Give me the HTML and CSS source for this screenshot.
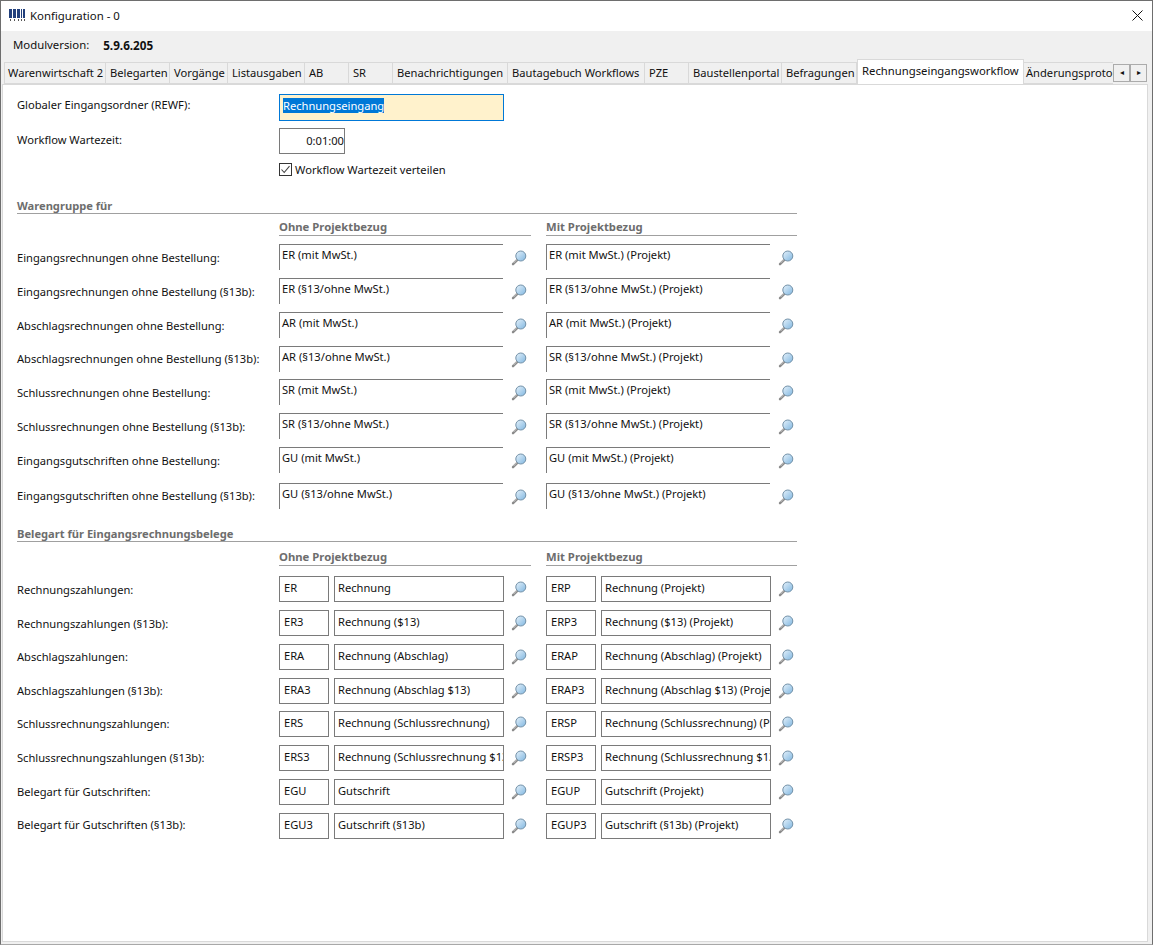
FILE: index.html
```html
<!DOCTYPE html>
<html lang="de">
<head>
  <meta charset="UTF-8">
  <title>Konfiguration - 0</title>
  <link rel="stylesheet" href="styles.css">
</head>
<body>
  <svg class="defs" width="0" height="0">
    <defs>
      <linearGradient id="lens" x1="0" y1="0" x2="1" y2="1">
        <stop offset="0" stop-color="#e6f2fb"/>
        <stop offset="1" stop-color="#7fb6e0"/>
      </linearGradient>
      <symbol id="lookup" viewBox="0 0 16 16">
        <path d="M6.6 9.6 2 14.2" stroke="#8a8a8a" stroke-width="2.4" stroke-linecap="round"/>
        <path d="M6.2 9.2 2.6 13" stroke="#d8d8d8" stroke-width="0.8"/>
        <circle cx="9.8" cy="6" r="5" fill="url(#lens)" stroke="#7391a8" stroke-width="1"/>
      </symbol>
    </defs>
  </svg>
  <div class="window">
    <div class="titlebar">
      <svg class="app-icon" width="16" height="14" viewBox="0 0 16 14">
        <g fill="#22407c">
          <rect x="0" y="1" width="3" height="9"/>
          <rect x="4" y="1" width="3" height="9"/>
          <rect x="8" y="1" width="3" height="9"/>
          <rect x="12" y="1" width="1" height="9"/>
          <rect x="14" y="1" width="2" height="9"/>
        </g>
        <g fill="#555">
          <rect x="1" y="11" width="1" height="2"/>
          <rect x="5" y="11" width="1" height="2"/>
          <rect x="9" y="11" width="1" height="2"/>
          <rect x="12" y="11" width="1" height="2"/>
          <rect x="15" y="11" width="1" height="2"/>
        </g>
      </svg>
      <span class="title">Konfiguration - 0</span>
      <svg class="close" width="11" height="11" viewBox="0 0 11 11">
        <path d="M0.5 0.5 10.5 10.5M10.5 0.5 0.5 10.5" stroke="#111" stroke-width="1"/>
      </svg>
    </div>
    <div class="versionbar">
      <span class="version-label">Modulversion:</span>
      <b class="version">5.9.6.205</b>
    </div>
    <div class="tabbar">
      <div class="tab">Warenwirtschaft 2</div>
      <div class="tab">Belegarten</div>
      <div class="tab">Vorgänge</div>
      <div class="tab">Listausgaben</div>
      <div class="tab">AB</div>
      <div class="tab">SR</div>
      <div class="tab">Benachrichtigungen</div>
      <div class="tab">Bautagebuch Workflows</div>
      <div class="tab">PZE</div>
      <div class="tab">Baustellenportal</div>
      <div class="tab">Befragungen</div>
      <div class="tab active">Rechnungseingangsworkflow</div>
      <div class="tab clipped">Änderungsprotokoll</div>
      <div class="scroller">
        <button class="scroll-btn">&#9666;</button>
        <button class="scroll-btn">&#9656;</button>
      </div>
    </div>
    <div class="pane">
      <div class="top-row">
        <label class="label">Globaler Eingangsordner (REWF):</label>
        <div class="field folder"><span class="selected">Rechnungseingang</span></div>
      </div>
      <div class="top-row wait">
        <label class="label">Workflow Wartezeit:</label>
        <div class="field time">0:01:00</div>
      </div>
      <div class="check-row">
        <svg width="13" height="13" viewBox="0 0 13 13">
          <rect x="0.5" y="0.5" width="12" height="12" fill="#fff" stroke="#333"/>
          <path d="M2.5 6.5 5.2 9.5 10.5 3.2" fill="none" stroke="#444" stroke-width="1.1"/>
        </svg>
        <span>Workflow Wartezeit verteilen</span>
      </div>

      <div class="section first">Warengruppe für</div>
      <div class="group-heads">
        <div class="group-head">Ohne Projektbezug</div>
        <div class="group-head">Mit Projektbezug</div>
      </div>
      <div id="goods"></div>

      <div class="section second">Belegart für Eingangsrechnungsbelege</div>
      <div class="group-heads">
        <div class="group-head">Ohne Projektbezug</div>
        <div class="group-head">Mit Projektbezug</div>
      </div>
      <div id="types" class="types"></div>
    </div>
  </div>

  <script>
    const lookup = '<svg class="lookup" width="16" height="16"><use href="#lookup"/></svg>';

    const goods = [
      ['Eingangsrechnungen ohne Bestellung:', 'ER (mit MwSt.)', 'ER (mit MwSt.) (Projekt)'],
      ['Eingangsrechnungen ohne Bestellung (§13b):', 'ER (§13/ohne MwSt.)', 'ER (§13/ohne MwSt.) (Projekt)'],
      ['Abschlagsrechnungen ohne Bestellung:', 'AR (mit MwSt.)', 'AR (mit MwSt.) (Projekt)'],
      ['Abschlagsrechnungen ohne Bestellung (§13b):', 'AR (§13/ohne MwSt.)', 'SR (§13/ohne MwSt.) (Projekt)'],
      ['Schlussrechnungen ohne Bestellung:', 'SR (mit MwSt.)', 'SR (mit MwSt.) (Projekt)'],
      ['Schlussrechnungen ohne Bestellung (§13b):', 'SR (§13/ohne MwSt.)', 'SR (§13/ohne MwSt.) (Projekt)'],
      ['Eingangsgutschriften ohne Bestellung:', 'GU (mit MwSt.)', 'GU (mit MwSt.) (Projekt)'],
      ['Eingangsgutschriften ohne Bestellung (§13b):', 'GU (§13/ohne MwSt.)', 'GU (§13/ohne MwSt.) (Projekt)']
    ];

    const types = [
      ['Rechnungszahlungen:', 'ER', 'Rechnung', 'ERP', 'Rechnung (Projekt)'],
      ['Rechnungszahlungen (§13b):', 'ER3', 'Rechnung ($13)', 'ERP3', 'Rechnung ($13) (Projekt)'],
      ['Abschlagszahlungen:', 'ERA', 'Rechnung (Abschlag)', 'ERAP', 'Rechnung (Abschlag) (Projekt)'],
      ['Abschlagszahlungen (§13b):', 'ERA3', 'Rechnung (Abschlag $13)', 'ERAP3', 'Rechnung (Abschlag $13) (Projekt)'],
      ['Schlussrechnungszahlungen:', 'ERS', 'Rechnung (Schlussrechnung)', 'ERSP', 'Rechnung (Schlussrechnung) (Projekt)'],
      ['Schlussrechnungszahlungen (§13b):', 'ERS3', 'Rechnung (Schlussrechnung $13)', 'ERSP3', 'Rechnung (Schlussrechnung $13) (Projekt)'],
      ['Belegart für Gutschriften:', 'EGU', 'Gutschrift', 'EGUP', 'Gutschrift (Projekt)'],
      ['Belegart für Gutschriften (§13b):', 'EGU3', 'Gutschrift (§13b)', 'EGUP3', 'Gutschrift (§13b) (Projekt)']
    ];

    document.getElementById('goods').innerHTML = goods.map(g => `
      <div class="row">
        <label class="label">${g[0]}</label>
        <div class="cell"><div class="field open">${g[1]}</div>${lookup}</div>
        <div class="cell"><div class="field open">${g[2]}</div>${lookup}</div>
      </div>`).join('');

    document.getElementById('types').innerHTML = types.map(t => `
      <div class="row">
        <label class="label">${t[0]}</label>
        <div class="cell"><div class="field code">${t[1]}</div><div class="field name">${t[2]}</div>${lookup}</div>
        <div class="cell"><div class="field code">${t[3]}</div><div class="field name">${t[4]}</div>${lookup}</div>
      </div>`).join('');
  </script>
</body>
</html>
```

FILE: styles.css
```css
html, body {
  margin: 0;
  padding: 0;
}

body {
  font-family: "Noto Sans", "Open Sans", sans-serif;
  font-size: 11.15px;
  color: #111;
  background: #ffffff;
}

.defs {
  position: absolute;
}

.window {
  box-sizing: border-box;
  width: 1153px;
  height: 945px;
  display: flex;
  flex-direction: column;
  border: 1px solid #6e6e6e;
  border-bottom-color: #a8a8a8;
  background: #f0f0f0;
}

.titlebar {
  height: 30px;
  flex: none;
  display: flex;
  align-items: center;
  padding: 0 9px 2px 8px;
  box-sizing: border-box;
  background: #ffffff;
}

.title {
  margin-left: 5px;
  font-size: 11.4px;
}

.close {
  margin-left: auto;
}

.versionbar {
  height: 30px;
  flex: none;
  box-sizing: border-box;
  display: flex;
  align-items: center;
  padding: 0 0 3px 12px;
  font-size: 11.35px;
}

.version {
  margin-left: 14px;
  font-size: 11.7px;
  font-weight: bold;
}

.tabbar {
  height: 23px;
  flex: none;
  display: grid;
  grid-template-columns: 102px 64px 58px 77px 44px 44px 115px 137px 44px 93px 75px 167px 89px 35px;
  padding-left: 3px;
}

.tab {
  box-sizing: border-box;
  height: 22px;
  margin-top: 1px;
  padding: 2px 0 0 4px;
  white-space: nowrap;
  overflow: hidden;
  border: 1px solid #d9d9d9;
  border-left: 0;
  background: #f0f0f0;
}

.tab:first-child {
  padding-left: 3px;
  border-left: 1px solid #d9d9d9;
}

.tab.active {
  height: 25px;
  margin-top: -2px;
  padding: 3px 0 0 4px;
  font-size: 11.3px;
  background: #ffffff;
  border: 1px solid #d9d9d9;
  border-bottom: 0;
  position: relative;
  z-index: 1;
}

.tab.clipped {
  padding-left: 2px;
  border-right: 0;
}

.scroller {
  display: flex;
  margin-top: 3px;
}

.scroll-btn {
  width: 17px;
  height: 18px;
  padding: 0;
  font-size: 8px;
  line-height: 14px;
  color: #111;
  background: #f0f0f0;
  border: 1px solid #ababab;
}

.pane {
  flex: 1;
  margin: 0 4px 2px 1px;
  padding: 9px 0 0 14px;
  background: #ffffff;
  border: 1px solid #d9d9d9;
}

.label {
  width: 262px;
  flex: none;
  white-space: nowrap;
}

.top-row {
  height: 27px;
  display: flex;
}

.top-row .label {
  padding-top: 3px;
}

.top-row.wait {
  margin-top: 7px;
  height: 26px;
}

.top-row.wait .label {
  padding-top: 4px;
}

.field {
  box-sizing: border-box;
  padding: 2px 3px;
  white-space: nowrap;
  overflow: hidden;
  border: 1px solid #7a7a7a;
  background: #ffffff;
}

.folder {
  width: 225px;
  height: 27px;
  padding: 3px 3px;
  background: #fff2cc;
  border-color: #0078d7;
}

.selected {
  color: #ffffff;
  background: #0078d7;
}

.time {
  width: 66px;
  height: 26px;
  padding: 4px 0 0 0;
  text-align: right;
}

.check-row {
  height: 16px;
  margin: 7px 0 0 262px;
  display: flex;
  align-items: center;
  gap: 3px;
}

.section {
  width: 780px;
  box-sizing: border-box;
  height: 17px;
  padding-top: 1px;
  font-weight: bold;
  color: #6d6d6d;
  border-bottom: 1px solid #a0a0a0;
}

.section.first {
  margin-top: 20px;
}

.section.second {
  margin-top: 8px;
}

.group-heads {
  display: grid;
  grid-template-columns: 252px 251px;
  column-gap: 15px;
  margin: 6px 0 8px 262px;
}

.section.second + .group-heads {
  margin-top: 8px;
}

.types {
  margin-top: 10px;
}

.group-head {
  box-sizing: border-box;
  height: 16px;
  font-size: 11.3px;
  line-height: 14px;
  font-weight: bold;
  color: #6d6d6d;
  border-bottom: 1px solid #a0a0a0;
}

.row {
  height: 34px;
  display: grid;
  grid-template-columns: 262px 267px 251px;
}

.row:nth-child(4) {
  height: 33px;
}

#goods .row:nth-child(7) {
  height: 36px;
}

.row .label {
  padding-top: 6px;
}

#goods .row:nth-child(4) .label,
#goods .row:nth-child(8) .label,
.types .row:nth-child(n+3) .label {
  padding-top: 5px;
}

.types .row:nth-child(8) .label {
  padding-top: 4px;
}

.cell {
  display: flex;
  align-items: flex-start;
  gap: 5px;
}

.open {
  width: 224px;
  height: 26px;
  flex: none;
  padding-left: 2px;
  border-right: 0;
  border-bottom: 0;
}

.code {
  width: 50px;
  height: 26px;
  flex: none;
  padding: 3px 0 0 4px;
}

.name {
  width: 170px;
  height: 26px;
  flex: none;
  padding-top: 3px;
}

.lookup {
  flex: none;
  margin-top: 5px;
  margin-left: 2px;
}

.open + .lookup {
  margin-top: 6px;
  margin-left: 3px;
}
```
